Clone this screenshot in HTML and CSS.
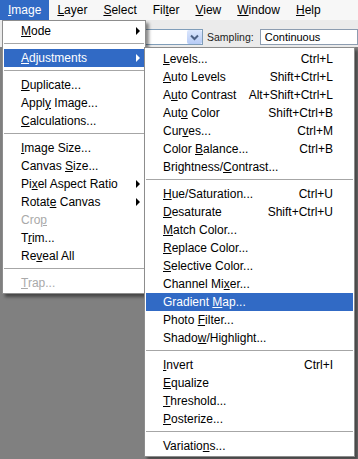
FILE: index.html
```html
<!DOCTYPE html>
<html lang="en">
<head>
    <meta charset="UTF-8">
    <title>Image menu</title>
    <link rel="stylesheet" href="styles.css">
</head>
<body>

    <!-- Menüleiste -->
    <div class="menubar">
        <span class="mb-item active"><u>I</u>mage</span>
        <span class="mb-item"><u>L</u>ayer</span>
        <span class="mb-item"><u>S</u>elect</span>
        <span class="mb-item">Fil<u>t</u>er</span>
        <span class="mb-item"><u>V</u>iew</span>
        <span class="mb-item"><u>W</u>indow</span>
        <span class="mb-item"><u>H</u>elp</span>
    </div>

    <!-- Optionsleiste -->
    <div class="optionsbar">
        <div class="combo">
            <span class="combo-btn">
                <svg width="9" height="7" viewBox="0 0 9 7"><path d="M1 1.5 L4.5 5 L8 1.5" fill="none" stroke="#4d6185" stroke-width="2"/></svg>
            </span>
        </div>
        <span class="opt-label">Sampling:</span>
        <div class="field">Continuous</div>
    </div>

    <div class="workspace"></div>

    <!-- Image-Menü -->
    <div class="menu image-menu">
        <div class="item"><span><u>M</u>ode</span><span class="arrow"></span></div>
        <div class="sep"></div>
        <div class="item hover"><span><u>A</u>djustments</span><span class="arrow"></span></div>
        <div class="sep"></div>
        <div class="item"><span><u>D</u>uplicate...</span></div>
        <div class="item"><span>Appl<u>y</u> Image...</span></div>
        <div class="item"><span><u>C</u>alculations...</span></div>
        <div class="sep"></div>
        <div class="item"><span><u>I</u>mage Size...</span></div>
        <div class="item"><span>Canvas <u>S</u>ize...</span></div>
        <div class="item"><span>Pi<u>x</u>el Aspect Ratio</span><span class="arrow"></span></div>
        <div class="item"><span>Rotat<u>e</u> Canvas</span><span class="arrow"></span></div>
        <div class="item disabled"><span>Cro<u>p</u></span></div>
        <div class="item"><span>T<u>r</u>im...</span></div>
        <div class="item"><span>Re<u>v</u>eal All</span></div>
        <div class="sep"></div>
        <div class="item disabled"><span><u>T</u>rap...</span></div>
    </div>

    <!-- Untermenü Adjustments -->
    <div class="menu submenu">
        <div class="item"><span><u>L</u>evels...</span><span>Ctrl+L</span></div>
        <div class="item"><span><u>A</u>uto Levels</span><span>Shift+Ctrl+L</span></div>
        <div class="item"><span>A<u>u</u>to Contrast</span><span>Alt+Shift+Ctrl+L</span></div>
        <div class="item"><span>Aut<u>o</u> Color</span><span>Shift+Ctrl+B</span></div>
        <div class="item"><span>Cur<u>v</u>es...</span><span>Ctrl+M</span></div>
        <div class="item"><span>Color <u>B</u>alance...</span><span>Ctrl+B</span></div>
        <div class="item"><span>Brightness/<u>C</u>ontrast...</span></div>
        <div class="sep"></div>
        <div class="item"><span><u>H</u>ue/Saturation...</span><span>Ctrl+U</span></div>
        <div class="item"><span><u>D</u>esaturate</span><span>Shift+Ctrl+U</span></div>
        <div class="item"><span><u>M</u>atch Color...</span></div>
        <div class="item"><span><u>R</u>eplace Color...</span></div>
        <div class="item"><span><u>S</u>elective Color...</span></div>
        <div class="item"><span>Channel Mi<u>x</u>er...</span></div>
        <div class="item hover"><span>Gradient <u>M</u>ap...</span></div>
        <div class="item"><span>Photo <u>F</u>ilter...</span></div>
        <div class="item"><span>Shado<u>w</u>/Highlight...</span></div>
        <div class="sep"></div>
        <div class="item"><span><u>I</u>nvert</span><span>Ctrl+I</span></div>
        <div class="item"><span><u>E</u>qualize</span></div>
        <div class="item"><span><u>T</u>hreshold...</span></div>
        <div class="item"><span><u>P</u>osterize...</span></div>
        <div class="sep"></div>
        <div class="item"><span>Variatio<u>n</u>s...</span></div>
    </div>

</body>
</html>
```

FILE: styles.css
```css
body {
    margin: 0;
    width: 358px;
    height: 459px;
    display: flex;
    flex-direction: column;
    font-family: "Liberation Sans", Arial, sans-serif;
    font-size: 12px;
    color: #000;
    background-color: #808080;
    overflow: hidden;
}
.menubar {
    display: flex;
    height: 20px;
    line-height: 20px;
    background-color: #f7f7f7;
}
.mb-item {
    padding: 0 8px;
}
.mb-item.active {
    background-color: #316ac5;
    color: #fff;
}
.optionsbar {
    display: flex;
    align-items: flex-start;
    height: 27px;
    padding-top: 9px;
    box-sizing: border-box;
    background-color: #ebebeb;
}
.combo {
    margin-left: 100px;
    width: 103px;
    height: 16px;
    box-sizing: border-box;
    border: 1px solid #7f9db9;
    background-color: #fff;
    display: flex;
    justify-content: flex-end;
}
.combo-btn {
    width: 15px;
    height: 14px;
    display: flex;
    align-items: center;
    justify-content: center;
    background: linear-gradient(#dce7fd, #b6cbf6);
    border-radius: 2px;
}
.opt-label {
    margin-left: 4px;
    font-size: 10.5px;
    line-height: 16px;
    color: #222;
}
.field {
    flex: 1;
    margin-left: 6px;
    height: 16px;
    box-sizing: border-box;
    border: 1px solid #8c9cb0;
    background-color: #fff;
    padding-left: 4px;
    font-size: 11px;
    line-height: 14px;
}
.workspace {
    flex: 1;
    background-color: #808080;
}
.menu {
    position: absolute;
    box-sizing: border-box;
    border: 1px solid #8d8d8d;
    padding: 1px;
    background-color: #fff;
    box-shadow: 3px 3px 3px rgba(0, 0, 0, 0.45);
}
.image-menu {
    top: 20px;
    left: 2px;
    width: 144px;
}
.submenu {
    top: 47px;
    left: 144px;
    width: 211px;
    padding-top: 2px;
}
.item {
    display: flex;
    align-items: center;
    justify-content: space-between;
    height: 18px;
    padding: 0 20px 0 17px;
    white-space: nowrap;
}
.image-menu .item {
    padding-right: 4px;
}
.item.hover {
    background-color: #316ac5;
    color: #fff;
}
.item.disabled {
    color: #a9a9a9;
}
.arrow {
    width: 0;
    height: 0;
    border-left: 4px solid #000;
    border-top: 4px solid transparent;
    border-bottom: 4px solid transparent;
}
.item.hover .arrow {
    border-left-color: #fff;
}
.sep {
    height: 1px;
    margin: 3px 0 5px;
    background-color: #a6a6a6;
}
```
